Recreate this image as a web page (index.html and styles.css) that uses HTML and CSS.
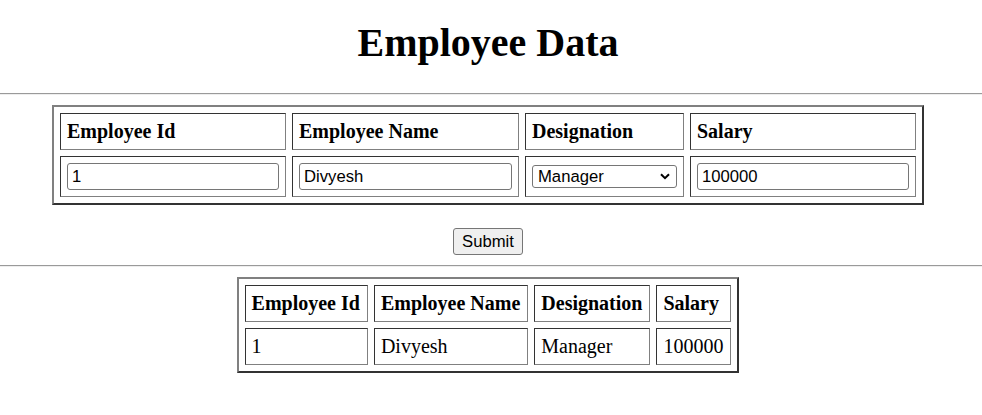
FILE: index.html
```html
<!DOCTYPE html>
<html lang="en">
<head>
<meta charset="utf-8">
<title>Employee Data</title>
<link rel="stylesheet" href="styles.css">
</head>
<body>
<div class="col">
  <h1 class="title">Employee Data</h1>
</div>
<hr class="rule">
<div class="col">
  <form class="entry">
    <table class="grid grid-entry">
      <tr>
        <th class="c-id">Employee Id</th>
        <th class="c-name">Employee Name</th>
        <th class="c-des">Designation</th>
        <th class="c-sal">Salary</th>
      </tr>
      <tr>
        <td><input class="field" type="text" value="1"></td>
        <td><input class="field" type="text" value="Divyesh"></td>
        <td>
          <span class="select-wrap">
            <select class="picker">
              <option selected>Manager</option>
              <option>Developer</option>
              <option>Tester</option>
            </select>
            <svg class="chevron" width="10" height="7" viewBox="0 0 10 7" aria-hidden="true">
              <path d="M1 1.2 L5 5.2 L9 1.2" fill="none" stroke="#000" stroke-width="2"/>
            </svg>
          </span>
        </td>
        <td><input class="field" type="text" value="100000"></td>
      </tr>
    </table>
    <div class="actions">
      <button class="btn" type="button">Submit</button>
    </div>
  </form>
</div>
<hr class="rule">
<div class="col">
  <table class="grid grid-result">
    <tr>
      <th>Employee Id</th>
      <th>Employee Name</th>
      <th>Designation</th>
      <th>Salary</th>
    </tr>
    <tr>
      <td>1</td>
      <td>Divyesh</td>
      <td>Manager</td>
      <td>100000</td>
    </tr>
  </table>
</div>
</body>
</html>
```
FILE: styles.css
```css
html, body {
  margin: 0;
  padding: 0;
  background: #ffffff;
  color: #000000;
}

body {
  font-family: "Liberation Serif", "Times New Roman", serif;
  font-size: 20px;
}

.col {
  width: 976px;
}

.title {
  margin: 20px 0 27px;
  font-size: 40px;
  font-weight: bold;
  text-align: center;
  line-height: 46px;
}

.rule {
  height: 0;
  margin: 10px 0;
  border: none;
  border-top: 1px solid #9a9a9a;
  border-bottom: 1px solid #eeeeee;
}

.entry {
  margin: 0;
}

.grid {
  border-collapse: separate;
  border-spacing: 6px;
  border-width: 2px;
  border-style: solid;
  border-color: #808080 #333333 #333333 #808080;
  margin: 0 auto;
}

.grid th,
.grid td {
  padding: 6px;
  border-width: 1px;
  border-style: solid;
  border-color: #333333 #808080 #808080 #333333;
  line-height: 23px;
  text-align: left;
  vertical-align: middle;
  font-size: 20px;
}

.grid th {
  font-weight: bold;
}

.grid td {
  font-weight: normal;
}

.grid-entry {
  table-layout: fixed;
  width: 872px;
}

.grid-entry .c-id { width: 212px; }
.grid-entry .c-name { width: 213px; }
.grid-entry .c-des { width: 145px; }
.grid-entry .c-sal { width: 212px; }

.field {
  display: block;
  box-sizing: border-box;
  width: 100%;
  height: 27px;
  margin: 0;
  padding: 0 4px;
  border: 1px solid #767676;
  border-radius: 3px;
  font-family: "Liberation Sans", Arial, sans-serif;
  font-size: 16.67px;
  color: #000000;
  background: #ffffff;
}

.select-wrap {
  position: relative;
  display: block;
  margin: 2px 0;
}

.picker {
  display: block;
  box-sizing: border-box;
  width: 100%;
  height: 23px;
  margin: 0;
  padding: 0 20px 0 5px;
  border: 1px solid #767676;
  border-radius: 3px;
  font-family: "Liberation Sans", Arial, sans-serif;
  font-size: 16.67px;
  color: #000000;
  background: #ffffff;
  appearance: none;
  -webkit-appearance: none;
}

.chevron {
  position: absolute;
  right: 7px;
  top: 8px;
  pointer-events: none;
}

.actions {
  display: flex;
  justify-content: center;
  margin-top: 23px;
}

.btn {
  box-sizing: border-box;
  height: 27px;
  padding: 0 8px;
  margin: 0;
  border: 1px solid #767676;
  border-radius: 3px;
  background: #efefef;
  font-family: "Liberation Sans", Arial, sans-serif;
  font-size: 16.67px;
  color: #000000;
}

.grid-result {
  margin-top: 10px;
}

.grid-result th,
.grid-result td {
  padding-left: 6px;
  padding-right: 7px;
}
```
